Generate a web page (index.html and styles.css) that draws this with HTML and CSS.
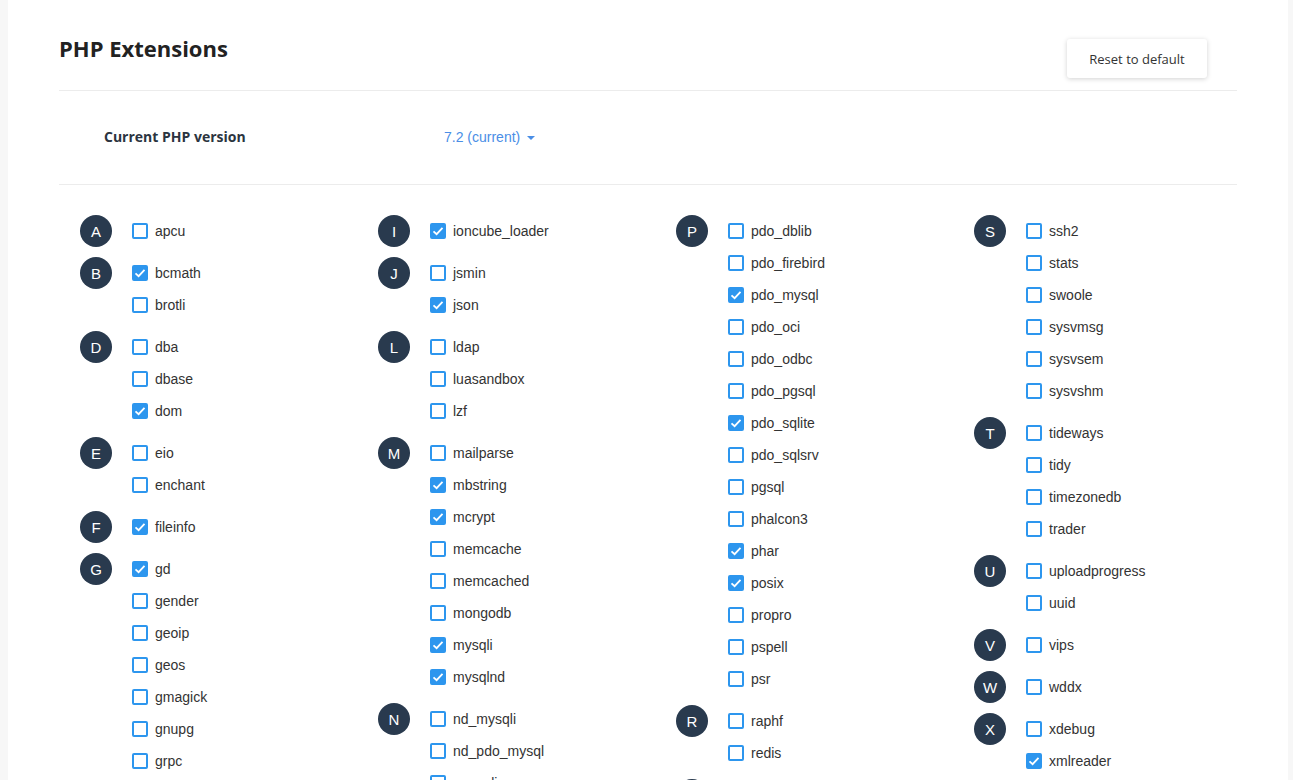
FILE: index.html
```html
<!DOCTYPE html>
<html lang="en">
<head>
  <meta charset="UTF-8" />
  <title>PHP Extensions</title>
  <link rel="stylesheet" href="styles.css">
</head>
<body>
  <div class="panel">
    <div class="header">
      <h1>PHP Extensions</h1>
      <button class="reset-button">Reset to default</button>
    </div>

    <div class="version-row">
      <span class="version-label">Current PHP version</span>
      <span class="version-select">7.2 (current) <span class="caret"></span></span>
    </div>

    <div class="ext-grid" id="extGrid"></div>
  </div>

  <script>
    const columns = [
      [
        ["A", ["apcu"]],
        ["B", ["+bcmath", "brotli"]],
        ["D", ["dba", "dbase", "+dom"]],
        ["E", ["eio", "enchant"]],
        ["F", ["+fileinfo"]],
        ["G", ["+gd", "gender", "geoip", "geos", "gmagick", "gnupg", "grpc", "gmp"]]
      ],
      [
        ["I", ["+ioncube_loader"]],
        ["J", ["jsmin", "+json"]],
        ["L", ["ldap", "luasandbox", "lzf"]],
        ["M", ["mailparse", "+mbstring", "+mcrypt", "memcache", "memcached", "mongodb", "+mysqli", "+mysqlnd"]],
        ["N", ["nd_mysqli", "nd_pdo_mysql", "newrelic"]]
      ],
      [
        ["P", ["pdo_dblib", "pdo_firebird", "+pdo_mysql", "pdo_oci", "pdo_odbc", "pdo_pgsql", "+pdo_sqlite", "pdo_sqlsrv", "pgsql", "phalcon3", "+phar", "+posix", "propro", "pspell", "psr"]],
        ["R", ["raphf", "redis"]],
        ["S", ["snmp"]]
      ],
      [
        ["S", ["ssh2", "stats", "swoole", "sysvmsg", "sysvsem", "sysvshm"]],
        ["T", ["tideways", "tidy", "timezonedb", "trader"]],
        ["U", ["uploadprogress", "uuid"]],
        ["V", ["vips"]],
        ["W", ["wddx"]],
        ["X", ["xdebug", "+xmlreader", "xmlrpc"]]
      ]
    ];

    const checkSvg = '<svg viewBox="0 0 16 16" width="16" height="16"><polyline points="3.5,8.3 6.6,11.2 12.5,4.8" fill="none" stroke="#fff" stroke-width="1.8"/></svg>';

    const grid = document.getElementById("extGrid");
    columns.forEach(col => {
      const colEl = document.createElement("div");
      colEl.className = "ext-column";
      col.forEach(([letter, items]) => {
        let html = '<div class="letter">' + letter + '</div><div class="items">';
        items.forEach(name => {
          const checked = name.startsWith("+");
          const label = checked ? name.slice(1) : name;
          html += '<label class="ext-item"><span class="box' + (checked ? ' checked' : '') + '">' +
            (checked ? checkSvg : '') + '</span>' + label + '</label>';
        });
        html += '</div>';
        const group = document.createElement("div");
        group.className = "ext-group";
        group.innerHTML = html;
        colEl.appendChild(group);
      });
      grid.appendChild(colEl);
    });
  </script>
</body>
</html>
```

FILE: styles.css
```css
body {
  margin: 0;
  background-color: #f7f7f7;
  font-family: 'Open Sans', sans-serif;
  color: #333;
  overflow: hidden;
}
.panel {
  margin-left: 8px;
  width: 1280px;
  min-height: 900px;
  background: #fff;
  padding: 0 51px;
  box-sizing: border-box;
}
.header {
  display: flex;
  justify-content: space-between;
  align-items: flex-start;
  height: 91px;
  border-bottom: 1px solid #ececec;
  box-sizing: border-box;
}
.header h1 {
  margin: 33px 0 0 0;
  font-size: 22px;
  font-weight: 700;
  color: #222;
}
.reset-button {
  margin: 39px 30px 0 0;
  width: 140px;
  height: 39px;
  background: #fff;
  border: none;
  border-radius: 3px;
  box-shadow: 0 1px 5px rgba(0,0,0,0.18);
  font-family: 'Open Sans', sans-serif;
  font-size: 13px;
  color: #333;
}
.version-row {
  display: flex;
  align-items: center;
  height: 94px;
  border-bottom: 1px solid #ececec;
  box-sizing: border-box;
  padding: 0 0 2px 45px;
}
.version-label {
  width: 340px;
  font-size: 14px;
  font-weight: 700;
  color: #2b3440;
}
.version-select {
  font-family: 'Liberation Sans', Arial, sans-serif;
  font-size: 14px;
  color: #4a8ee6;
}
.caret {
  display: inline-block;
  margin-left: 3px;
  vertical-align: middle;
  border-left: 4px solid transparent;
  border-right: 4px solid transparent;
  border-top: 4px solid #4a8ee6;
}
.ext-grid {
  display: grid;
  grid-template-columns: repeat(4, 298px);
  padding: 30px 0 0 21px;
}
.ext-group {
  display: flex;
  margin-bottom: 10px;
}
.letter {
  width: 32px;
  height: 32px;
  border-radius: 50%;
  background: #293a4e;
  color: #fff;
  font-family: 'Liberation Sans', Arial, sans-serif;
  font-size: 15px;
  display: flex;
  align-items: center;
  justify-content: center;
  margin-right: 20px;
  flex-shrink: 0;
}
.ext-item {
  display: flex;
  align-items: center;
  height: 32px;
  font-family: 'Liberation Sans', Arial, sans-serif;
  font-size: 14px;
  color: #333;
}
.box {
  width: 16px;
  height: 16px;
  border: 2px solid #2d96ee;
  border-radius: 2px;
  box-sizing: border-box;
  margin-right: 7px;
  display: flex;
  align-items: center;
  justify-content: center;
}
.box.checked {
  background: #2d96ee;
}
.box svg {
  display: block;
  flex-shrink: 0;
}
```
